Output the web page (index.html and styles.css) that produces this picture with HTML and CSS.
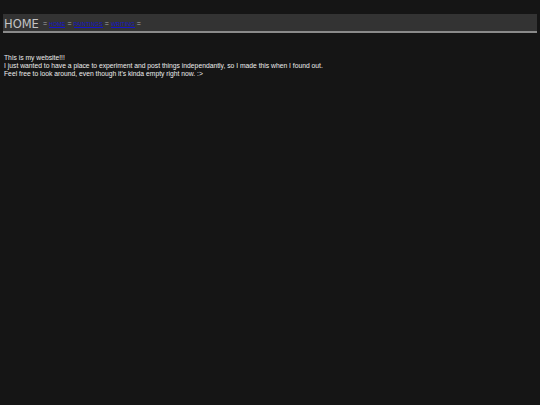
FILE: index.html
```html
<!DOCTYPE html>
<html lang="en">
<head>
    <meta charset="UTF-8">
    <title>Home</title>
    <link rel="stylesheet" href="styles.css">
</head>
<body>
    <div class="header">
        <span class="title">HOME</span>
        <span class="sep">=</span>
        <a href="#">HOME</a>
        <span class="sep">=</span>
        <a href="#">PAINTINGS</a>
        <span class="sep">=</span>
        <a href="#">WRITING</a>
        <span class="sep">=</span>
    </div>

    <div class="content">
        <p>This is my website!!!<br>
        I just wanted to have a place to experiment and post things independantly, so I made this when I found out.<br>
        Feel free to look around, even though it's kinda empty right now. :&gt;</p>
    </div>
</body>
</html>
```

FILE: styles.css
```css
body {
    margin: 0;
    padding: 14px 3px;
    background-color: #151515;
    color: #eeeeee;
    font-family: "Liberation Sans", Arial, sans-serif;
}
.header {
    display: flex;
    align-items: center;
    gap: 2px;
    padding-left: 1px;
    padding-top: 2px;
    box-sizing: border-box;
    height: 19px;
    background-color: #333333;
    border-bottom: 2px solid #8a8a8a;
}
.title {
    font-family: "DejaVu Sans", sans-serif;
    font-size: 11.5px;
    color: #c4c4c4;
    margin-right: 2px;
}
.sep {
    font-size: 7px;
    color: #aaaaaa;
}
.header a {
    font-size: 5.5px;
    line-height: 5px;
    margin-top: 2px;
    color: #1515c8;
    text-decoration: none;
    border-bottom: 1px solid #1515c8;
}
.content {
    padding: 21px 1px;
}
.content p {
    margin: 0;
    font-size: 6.75px;
    line-height: 8px;
}
```
